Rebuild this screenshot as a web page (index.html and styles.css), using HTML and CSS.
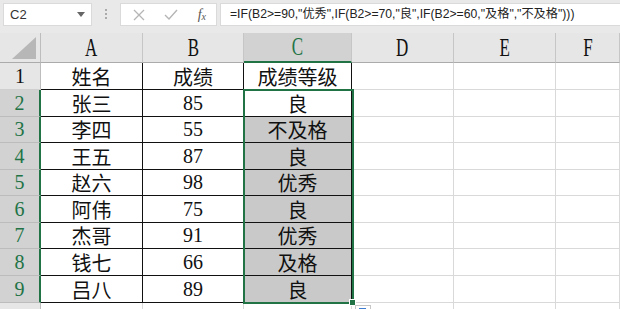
FILE: index.html
```html
<!DOCTYPE html>
<html lang="zh-CN">
<head>
    <meta charset="UTF-8">
    <title>成绩等级</title>
    <link rel="stylesheet" href="styles.css">
</head>
<body>
    <div class="toolbar">
        <div class="namebox">
            <span>C2</span>
            <svg class="drop" width="8" height="5" viewBox="0 0 8 5"><polygon points="0,0 8,0 4,5" fill="#666"/></svg>
        </div>
        <div class="grip">
            <svg width="3" height="11" viewBox="0 0 3 11"><rect x="0" y="0" width="2" height="2" fill="#aaa"/><rect x="0" y="4" width="2" height="2" fill="#aaa"/><rect x="0" y="8" width="2" height="2" fill="#aaa"/></svg>
        </div>
        <div class="fxbtns">
            <svg width="12" height="12" viewBox="0 0 12 12"><path d="M1 1 L11 11 M11 1 L1 11" stroke="#b5b5b5" stroke-width="1.3" fill="none"/></svg>
            <svg width="14" height="12" viewBox="0 0 14 12"><path d="M1 6 L5 10 L13 1" stroke="#b5b5b5" stroke-width="1.4" fill="none"/></svg>
            <span class="fx">f<sub>x</sub></span>
        </div>
        <div class="formula">=IF(B2&gt;=90,"优秀",IF(B2&gt;=70,"良",IF(B2&gt;=60,"及格","不及格")))</div>
    </div>

    <div class="sheet">
        <div class="corner"><svg width="24" height="22" viewBox="0 0 24 22"><polygon points="24,0 24,22 0,22" fill="#b7b7b7"/></svg></div>
        <div class="colhead"><span>A</span></div>
        <div class="colhead"><span>B</span></div>
        <div class="colhead sel"><span>C</span></div>
        <div class="colhead"><span>D</span></div>
        <div class="colhead"><span>E</span></div>
        <div class="colhead"><span>F</span></div>

        <div class="rowhead">1</div>
        <div class="cell tb">姓名</div><div class="cell tb">成绩</div><div class="cell tb">成绩等级</div><div class="cell"></div><div class="cell"></div><div class="cell"></div>

        <div class="rowhead sel">2</div>
        <div class="cell tb">张三</div><div class="cell tb">85</div><div class="cell tb">良</div><div class="cell"></div><div class="cell"></div><div class="cell"></div>

        <div class="rowhead sel">3</div>
        <div class="cell tb">李四</div><div class="cell tb">55</div><div class="cell tb fill">不及格</div><div class="cell"></div><div class="cell"></div><div class="cell"></div>

        <div class="rowhead sel">4</div>
        <div class="cell tb">王五</div><div class="cell tb">87</div><div class="cell tb fill">良</div><div class="cell"></div><div class="cell"></div><div class="cell"></div>

        <div class="rowhead sel">5</div>
        <div class="cell tb">赵六</div><div class="cell tb">98</div><div class="cell tb fill">优秀</div><div class="cell"></div><div class="cell"></div><div class="cell"></div>

        <div class="rowhead sel">6</div>
        <div class="cell tb">阿伟</div><div class="cell tb">75</div><div class="cell tb fill">良</div><div class="cell"></div><div class="cell"></div><div class="cell"></div>

        <div class="rowhead sel">7</div>
        <div class="cell tb">杰哥</div><div class="cell tb">91</div><div class="cell tb fill">优秀</div><div class="cell"></div><div class="cell"></div><div class="cell"></div>

        <div class="rowhead sel">8</div>
        <div class="cell tb">钱七</div><div class="cell tb">66</div><div class="cell tb fill">及格</div><div class="cell"></div><div class="cell"></div><div class="cell"></div>

        <div class="rowhead sel">9</div>
        <div class="cell tb">吕八</div><div class="cell tb">89</div><div class="cell tb fill">良</div><div class="cell"></div><div class="cell"></div><div class="cell"></div>

        <div class="rowhead"></div>
        <div class="cell"></div><div class="cell"></div><div class="cell"></div><div class="cell"></div><div class="cell"></div><div class="cell"></div>

        <div class="selection"><div class="handle"></div></div>
        <div class="paste"><div class="paste-icon"></div></div>
    </div>
</body>
</html>
```

FILE: styles.css
```css
body {
    margin: 0;
    width: 620px;
    height: 309px;
    overflow: hidden;
    background-color: #fff;
    font-family: "Liberation Serif", "Noto Sans CJK SC", serif;
}

.toolbar {
    height: 33px;
    background-color: #e9e9e9;
    display: flex;
    align-items: flex-start;
    padding-top: 3px;
    box-sizing: border-box;
}

.namebox {
    width: 89px;
    height: 23px;
    margin-left: 3px;
    background-color: #fff;
    border: 1px solid #dadada;
    box-sizing: border-box;
    display: flex;
    align-items: center;
    justify-content: space-between;
    padding: 0 6px 0 6px;
    font-family: "Liberation Sans", "Noto Sans CJK SC", sans-serif;
    font-size: 13px;
    color: #333;
}

.grip {
    width: 28px;
    height: 23px;
    display: flex;
    align-items: center;
    justify-content: center;
}

.fxbtns {
    width: 97px;
    height: 23px;
    background-color: #fff;
    border: 1px solid #dadada;
    box-sizing: border-box;
    display: flex;
    align-items: center;
    justify-content: space-between;
    padding: 0 10px 0 12px;
}

.fx {
    font-family: "Liberation Serif", serif;
    font-style: italic;
    font-size: 14px;
    color: #555;
}

.fx sub {
    font-size: 10px;
    vertical-align: -1px;
}

.formula {
    flex: 1;
    height: 23px;
    margin-left: 3px;
    background-color: #fff;
    border: 1px solid #dadada;
    border-right: none;
    box-sizing: border-box;
    padding-left: 9px;
    line-height: 21px;
    font-family: "Liberation Sans", "Noto Sans CJK SC", sans-serif;
    font-size: 12.2px;
    color: #222;
    white-space: nowrap;
}

.sheet {
    position: relative;
    display: grid;
    grid-template-columns: 41px 102px 101px 108px 102px 102px 64px;
    grid-template-rows: 30px 27px 27px 26px 27px 26px 27px 26px 27px 27px 20px;
}

.corner {
    background-color: #e6e6e6;
    border-right: 1px solid #bdbdbd;
    border-bottom: 1px solid #ababab;
    box-sizing: border-box;
    display: flex;
    align-items: flex-end;
    justify-content: flex-end;
    padding: 0 4px 3px 0;
}

.colhead {
    background-color: #e6e6e6;
    border-right: 1px solid #c6c6c6;
    border-bottom: 1px solid #ababab;
    box-sizing: border-box;
    display: flex;
    align-items: center;
    justify-content: center;
    font-size: 25px;
    color: #111;
}

.colhead span {
    display: inline-block;
    transform: scaleX(0.68);
}

.colhead.sel {
    background-color: #d2d2d2;
    color: #217346;
    border-bottom: 2px solid #217346;
}

.rowhead {
    background-color: #e6e6e6;
    border-right: 1px solid #bdbdbd;
    border-bottom: 1px solid #cfcfcf;
    box-sizing: border-box;
    display: flex;
    align-items: center;
    justify-content: center;
    font-size: 20px;
    color: #111;
}

.rowhead.sel {
    background-color: #d2d2d2;
    color: #217346;
    border-right: 2px solid #217346;
    border-bottom-color: #bcbcbc;
}

.cell {
    border-right: 1px solid #d9d9d9;
    border-bottom: 1px solid #d9d9d9;
    box-sizing: border-box;
    display: flex;
    align-items: center;
    justify-content: center;
    font-size: 20px;
    color: #111;
}

.cell.tb {
    border-right-color: #111;
    border-bottom-color: #111;
}

.cell.fill {
    background-color: #c9c9c9;
}

.selection {
    position: absolute;
    left: 243px;
    top: 56px;
    width: 111px;
    height: 215px;
    border: 2px solid #217346;
    box-sizing: border-box;
}

.handle {
    position: absolute;
    right: -4px;
    bottom: -4px;
    width: 5px;
    height: 5px;
    background-color: #217346;
    border: 1px solid #fff;
}

.paste {
    position: absolute;
    left: 355px;
    top: 272px;
    width: 16px;
    height: 10px;
    background-color: #fff;
    border: 1px solid #c6c6c6;
    box-sizing: border-box;
    padding: 2px 0 0 3px;
}

.paste-icon {
    width: 7px;
    height: 5px;
    background-color: #3d7cd0;
}
```
